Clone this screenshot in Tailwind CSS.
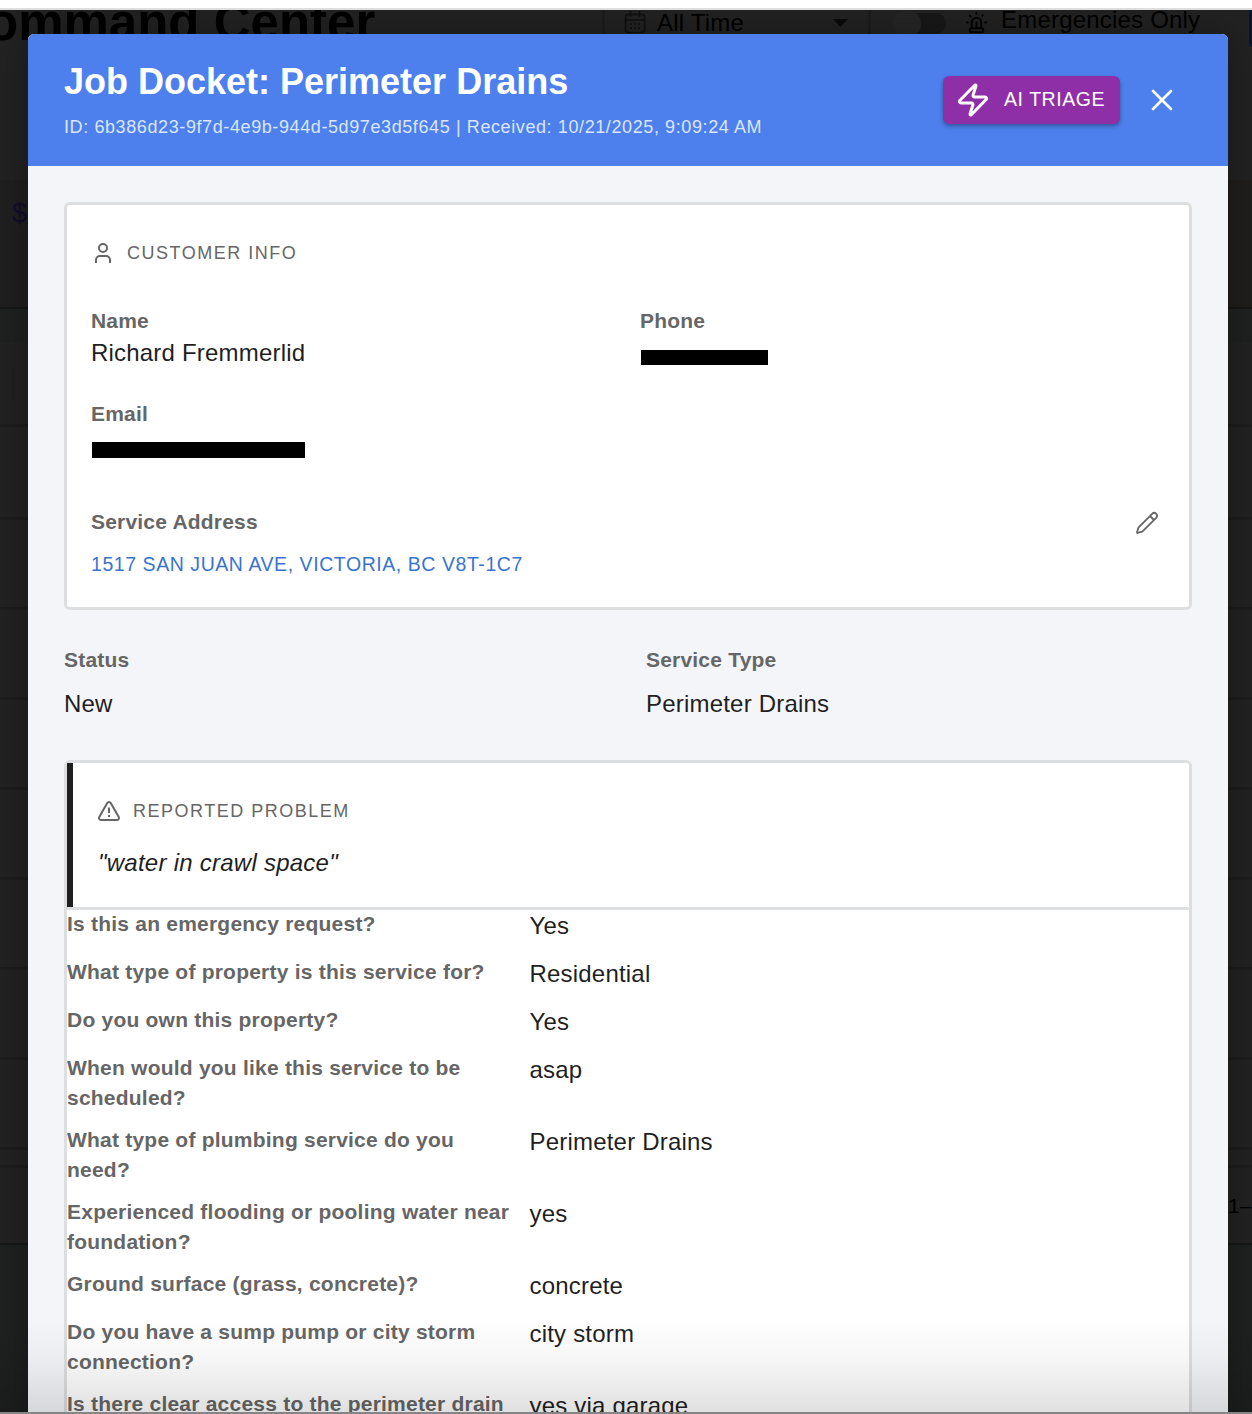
<!DOCTYPE html>
<html lang="en">
<head>
<meta charset="utf-8">
<title>Job Docket</title>
<script src="https://cdn.jsdelivr.net/npm/@tailwindcss/browser@4"></script>
</head>
<body class="h-[1414px] overflow-hidden bg-white font-['Liberation_Sans',Arial,sans-serif]">
<div class="flex h-[1414px] flex-col">
  <div class="h-[10px] shrink-0 border-b-2 border-[#dedede] bg-white"></div>
  <div class="relative h-[1402px] overflow-hidden bg-[#222222]">

    <!-- dimmed dashboard -->
    <div class="flex h-full flex-col text-black">
      <div class="flex h-[170px] shrink-0 items-start">
        <div class="-ml-[13px] -mt-[17px] w-[615px] whitespace-nowrap text-[51px] font-bold leading-[60px]">ommand Center</div>
        <div class="flex h-[40px] w-[269px] items-start border-x-3 border-[#1c1c1c] pl-[18px]">
          <svg class="mt-px h-[24px] w-[24px]" viewBox="0 0 24 24" fill="none" stroke="#101010" stroke-width="1.6"><rect x="2.5" y="3.500" width="19" height="18" rx="2.500"/><path d="M2.500 9h19M7.500 0v6M16.500 0v6"/><path d="M7 13h2m2 0h2m2 0h2M7 17h2m2 0h2m2 0h2"/></svg>
          <span class="ml-[10px] -mt-[5px] w-[176px] text-[24px] leading-[36px] tracking-[0.2px]">All Time</span>
          <svg class="mt-[9px] h-[8px] w-[15px]" viewBox="0 0 15 8"><path d="M0 0h15L7.500 8z" fill="#0a0a0a"/></svg>
        </div>
        <div class="ml-[22px] mt-[3px] flex h-[21px] w-[53px] justify-start rounded-full bg-[#181818]"><div class="-mt-[3px] h-[28px] w-[28px] rounded-full bg-[#252525]"></div></div>
        <svg class="ml-[19px] mt-px h-[23px] w-[23px]" viewBox="0 0 24 24" fill="none" stroke="#000" stroke-width="2" stroke-linecap="round"><path d="M7 18v-6a5 5 0 1 1 10 0v6M5 21a1 1 0 0 0 1 1h12a1 1 0 0 0 1-1v-1a2 2 0 0 0-2-2H7a2 2 0 0 0-2 2zM21 12h1M18.500 4.500 18 5M2 12h1M12 2v1M4.900 4.900l.7.7M12 12v6"/></svg>
        <span class="ml-[13px] -mt-[8px] whitespace-nowrap text-[24px] leading-[36px] tracking-[0.2px]">Emergencies Only</span>
        <div class="ml-auto h-[37px] w-[3px] rounded-bl bg-[#071731]"></div>
      </div>
      <div class="flex h-[129px] shrink-0 justify-between border-b-2 border-[#161616] bg-[#201f20]">
        <span class="pl-[12px] pt-[15px] text-[27px] leading-[36px] text-[#120d2a]">$</span><span class="w-[24px] bg-[#201e1c]"></span>
      </div>
      <div class="h-[34px] shrink-0 bg-[#1f2121]"></div>
      <div class="h-[84px] shrink-0 border-b-3 border-[#1d1d1d] pt-[24px]"><div class="ml-[12px] h-[34px] w-[2px] bg-[#1f1f1f]"></div></div>
      <div class="h-[93px] shrink-0 border-b-3 border-[#1d1d1d]"></div>
      <div class="h-[90px] shrink-0 border-b-3 border-[#1d1d1d]"></div>
      <div class="h-[90px] shrink-0 border-b-3 border-[#1d1d1d]"></div>
      <div class="h-[90px] shrink-0 border-b-3 border-[#1d1d1d]"></div>
      <div class="h-[90px] shrink-0 border-b-3 border-[#1d1d1d]"></div>
      <div class="h-[90px] shrink-0 border-b-3 border-[#1d1d1d]"></div>
      <div class="h-[90px] shrink-0 border-b-3 border-[#1d1d1d]"></div>
      <div class="h-[90px] shrink-0 border-b-3 border-[#1d1d1d]"></div>
      <div class="h-[18px] shrink-0 border-b-3 border-[#1d1d1d]"></div>
      <div class="flex h-[77px] shrink-0 justify-end border-b-2 border-[#161616] pt-[23px]"><span class="-mr-[11px] text-[21px] leading-[30px]">1–5</span></div>
      <div class="flex-1 bg-[#1f2120]"></div>
    </div>

    <!-- dialog -->
    <div class="absolute left-[28px] top-[24px] h-[1400px] w-[1200px] overflow-hidden rounded-t-[6px] bg-[#f4f5f8] text-[#1f1f1f] shadow-[0_0_36px_rgba(0,0,0,0.3)]">
      <header class="flex h-[132px] items-start bg-[#4d80ed] pl-[36px] text-white">
        <div class="w-[879px] pt-[24px]">
          <h1 class="whitespace-nowrap text-[36px] font-bold leading-[48px]">Job Docket: Perimeter Drains</h1>
          <p class="mt-[6px] whitespace-nowrap text-[18px] leading-[30px] tracking-[0.6px] text-[#dbe6fc]">ID: 6b386d23-9f7d-4e9b-944d-5d97e3d5f645 | Received: 10/21/2025, 9:09:24 AM</p>
        </div>
        <button class="mt-[42px] flex h-[48px] w-[177px] items-center rounded-[6px] bg-[#8f2fa8] pl-[12px] shadow-[0_2px_4px_rgba(0,0,0,0.35)]">
          <svg class="h-[36px] w-[36px]" viewBox="0 0 24 24" fill="none" stroke="currentColor" stroke-width="2" stroke-linecap="round" stroke-linejoin="round"><path d="M4 14a1 1 0 0 1-.78-1.630l9.900-10.200a.5.500 0 0 1 .86.460l-1.920 6.020A1 1 0 0 0 13 10h7a1 1 0 0 1 .78 1.630l-9.900 10.200a.5.500 0 0 1-.86-.460l1.920-6.020A1 1 0 0 0 11 14z"/></svg>
          <span class="ml-[13px] -mt-[2px] whitespace-nowrap text-[19.5px] leading-[30px] tracking-[0.550px]">AI TRIAGE</span>
        </button>
        <svg class="ml-[24px] mt-[48px] h-[36px] w-[36px]" viewBox="0 0 24 24" fill="none" stroke="currentColor" stroke-width="1.800" stroke-linecap="round"><path d="M18 6 6 18M6 6l12 12"/></svg>
      </header>

      <main class="px-[36px] pt-[36px]">
        <section class="h-[408px] w-[1128px] rounded-[6px] border-3 border-[#dddedf] bg-white px-[24px] pt-[30px]">
          <div class="flex h-[36px] items-center text-[#666]">
            <svg class="h-[24px] w-[24px]" viewBox="0 0 24 24" fill="none" stroke="currentColor" stroke-width="2" stroke-linejoin="round"><path d="M19 22v-3a4 4 0 0 0-4-4H9a4 4 0 0 0-4 4v3"/><circle cx="12" cy="7" r="4"/></svg>
            <span class="ml-[12px] text-[18px] tracking-[1.5px]">CUSTOMER INFO</span>
          </div>
          <div class="mt-[34px] grid grid-cols-[549px_1fr]">
            <div class="h-[93px]">
              <div class="text-[21px] font-bold leading-[32px] tracking-[0.2px] text-[#666]">Name</div>
              <div class="text-[24px] leading-[32px] tracking-[0.2px]">Richard Fremmerlid</div>
            </div>
            <div>
              <div class="text-[21px] font-bold leading-[32px] tracking-[0.2px] text-[#666]">Phone</div>
              <div class="mt-[13px] ml-px h-[15px] w-[127px] bg-black"></div>
            </div>
            <div class="h-[108px]">
              <div class="text-[21px] font-bold leading-[32px] tracking-[0.2px] text-[#666]">Email</div>
              <div class="mt-[12px] ml-px h-[16px] w-[213px] bg-black"></div>
            </div>
          </div>
          <div class="flex h-[32px] items-center justify-between pr-[6px]">
            <div class="text-[21px] font-bold leading-[32px] tracking-[0.2px] text-[#666]">Service Address</div>
            <svg class="mt-[2px] h-[24px] w-[24px]" viewBox="0 0 24 24" fill="none" stroke="#666" stroke-width="1.800" stroke-linecap="round" stroke-linejoin="round"><path d="M21.170 6.810a1 1 0 0 0-3.990-3.990L3.840 16.170a2 2 0 0 0-.5.830L2.020 21.360a.5.500 0 0 0 .62.620l4.350-1.320a2 2 0 0 0 .83-.5zM15 5l4 4"/></svg>
          </div>
          <div class="mt-[10px] text-[19.5px] leading-[32px] tracking-[0.560px] text-[#3a74cd]">1517 SAN JUAN AVE, VICTORIA, BC V8T-1C7</div>
        </section>

        <div class="mt-[34px] grid h-[116px] grid-cols-[582px_1fr]">
          <div>
            <div class="text-[21px] font-bold leading-[32px] tracking-[0.2px] text-[#666]">Status</div>
            <div class="mt-[12px] text-[24px] leading-[32px] tracking-[0.2px]">New</div>
          </div>
          <div>
            <div class="text-[21px] font-bold leading-[32px] tracking-[0.2px] text-[#666]">Service Type</div>
            <div class="mt-[12px] text-[24px] leading-[32px] tracking-[0.2px]">Perimeter Drains</div>
          </div>
        </div>

        <section class="h-[700px] w-[1128px] rounded-t-[6px] border-3 border-[#dddedf] bg-white">
          <div class="h-[147px] border-b-3 border-[#dddedf]">
            <div class="h-[144px] border-l-6 border-[#1f1f1f] pl-[24px] pt-[30px]">
              <div class="flex h-[36px] items-center text-[#666]">
                <svg class="h-[24px] w-[24px]" viewBox="0 0 24 24" fill="none" stroke="currentColor" stroke-width="2" stroke-linecap="round" stroke-linejoin="round"><path d="m21.730 18-8-14a2 2 0 0 0-3.480 0l-8 14A2 2 0 0 0 4 21h16a2 2 0 0 0 1.730-3"/><path d="M12 8.500v5.500M12 16v2" stroke-linecap="butt"/></svg>
                <span class="ml-[12px] text-[18px] tracking-[1.500px]">REPORTED PROBLEM</span>
              </div>
              <div class="mt-[18px] pl-px text-[24px] italic leading-[32px] tracking-[0.250px]">"water in crawl space"</div>
            </div>
          </div>
          <dl class="-mt-px grid grid-cols-[462.500px_1fr] gap-y-[12px] [&>dd]:-mt-px [&>dd]:mb-px [&>dd]:text-[24px] [&>dd]:leading-[36px] [&>dd]:tracking-[0.2px] [&>dt]:text-[21px] [&>dt]:font-bold [&>dt]:leading-[30px] [&>dt]:tracking-[0.220px] [&>dt]:text-[#666]">
            <dt>Is this an emergency request?</dt><dd>Yes</dd>
            <dt>What type of property is this service for?</dt><dd>Residential</dd>
            <dt>Do you own this property?</dt><dd>Yes</dd>
            <dt>When would you like this service to be<br>scheduled?</dt><dd>asap</dd>
            <dt>What type of plumbing service do you<br>need?</dt><dd>Perimeter Drains</dd>
            <dt>Experienced flooding or pooling water near<br>foundation?</dt><dd>yes</dd>
            <dt>Ground surface (grass, concrete)?</dt><dd>concrete</dd>
            <dt>Do you have a sump pump or city storm<br>connection?</dt><dd>city storm</dd>
            <dt>Is there clear access to the perimeter drain</dt><dd>yes via garage</dd>
          </dl>
        </section>
      </main>
    </div>

    <div class="absolute inset-x-0 bottom-0 h-[96px] bg-[linear-gradient(to_bottom,rgba(0,0,0,0),rgba(0,0,0,0.035)_45%,rgba(0,0,0,0.12))]"></div>
  </div>
  <div class="h-[2px] shrink-0 bg-[#858585]"></div>
</div>
</body>
</html>
